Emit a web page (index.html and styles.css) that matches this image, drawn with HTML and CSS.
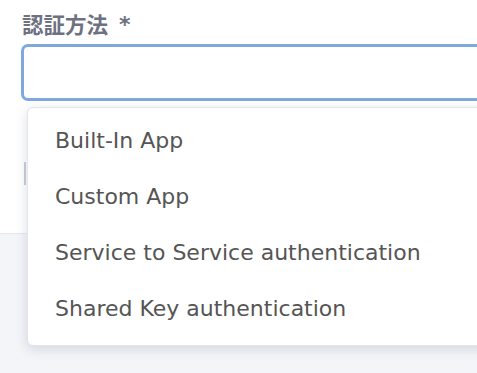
FILE: index.html
```html
<!DOCTYPE html>
<html lang="ja">
<head>
  <meta charset="UTF-8">
  <meta name="viewport" content="width=device-width, initial-scale=1.0">
  <title>認証方法</title>
  <link rel="stylesheet" href="styles.css">
</head>
<body>
  <div class="form-panel">
    <div class="field">
      <label class="field-label">認証方法<span class="req">*</span></label>
      <div class="select-wrap">
        <div class="select-box"></div>
        <ul class="select-menu">
          <li>Built-In App</li>
          <li>Custom App</li>
          <li>Service to Service authentication</li>
          <li>Shared Key authentication</li>
        </ul>
      </div>
    </div>
    <div class="field-next">
      <div class="next-input"></div>
    </div>
  </div>
  <div class="footer-panel"></div>
</body>
</html>
```

FILE: styles.css
```css
body {
  margin: 0;
  background-color: #fff;
  overflow: hidden;
  font-family: "DejaVu Sans", "Noto Sans CJK JP", sans-serif;
}
.form-panel {
  height: 234px;
  padding-left: 21px;
  box-sizing: border-box;
  border-bottom: 1px solid #e4e7ee;
}
.field {
  padding-top: 9px;
}
.field-label {
  display: flex;
  align-items: center;
  font-family: "Noto Sans CJK JP", sans-serif;
  font-size: 21.5px;
  font-weight: bold;
  line-height: 26px;
  color: #6d7181;
  padding-left: 1px;
}
.req {
  font-family: "DejaVu Sans", sans-serif;
  font-size: 22px;
  margin-left: 11px;
  margin-top: 3px;
}
.select-wrap {
  position: relative;
  margin-top: 6px;
}
.select-box {
  width: 520px;
  height: 57px;
  box-sizing: border-box;
  border: 3px solid #7fa9dc;
  border-radius: 7px;
  background: #fff;
}
.select-menu {
  position: absolute;
  top: 63px;
  left: 6px;
  width: 520px;
  margin: 0;
  padding: 5px 0 8px;
  list-style: none;
  background: #fff;
  border: 1px solid #e2e5ec;
  border-radius: 6px;
  box-shadow: 0 3px 12px rgba(60, 70, 100, 0.18);
  z-index: 2;
}
.select-menu li {
  height: 56px;
  line-height: 56px;
  padding-left: 27px;
  font-size: 22px;
  color: #555;
}
.field-next {
  padding-top: 61px;
}
.next-input {
  margin-left: 3px;
  width: 300px;
  height: 23px;
  border-left: 2px solid #c9cdd9;
}
.footer-panel {
  height: 139px;
  background-color: #f3f5f9;
}
```
